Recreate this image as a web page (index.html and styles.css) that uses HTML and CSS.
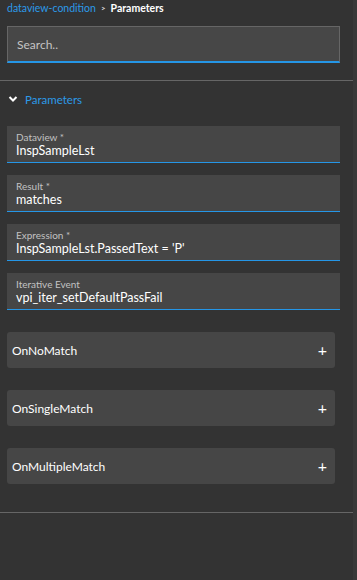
FILE: index.html
```html
<!DOCTYPE html>
<html lang="en">
<head>
  <meta charset="UTF-8">
  <meta name="viewport" content="width=device-width, initial-scale=1.0">
  <title>Parameters</title>
  <link rel="stylesheet" href="styles.css">
</head>
<body>
<div class="panel">
  <div class="crumbs">
    <a class="crumb-link">dataview-condition</a>
    <span class="crumb-sep">&gt;</span>
    <span class="crumb-current">Parameters</span>
  </div>

  <div class="search">
    <input type="text" placeholder="Search..">
  </div>

  <div class="section">
    <div class="section-head">
      <svg class="chevron" width="10" height="8" viewBox="0 0 10 8">
        <path d="M1.5 2 L5 5.5 L8.5 2" fill="none" stroke="#ffffff" stroke-width="2"/>
      </svg>
      <span>Parameters</span>
    </div>

    <div class="fields">
      <div class="field">
        <label>Dataview *</label>
        <div class="value">InspSampleLst</div>
      </div>
      <div class="field">
        <label>Result *</label>
        <div class="value">matches</div>
      </div>
      <div class="field">
        <label>Expression *</label>
        <div class="value">InspSampleLst.PassedText = 'P'</div>
      </div>
      <div class="field">
        <label>Iterative Event</label>
        <div class="value">vpi_iter_setDefaultPassFail</div>
      </div>
    </div>

    <div class="groups">
      <div class="group">
        <span>OnNoMatch</span>
        <span class="plus">+</span>
      </div>
      <div class="group">
        <span>OnSingleMatch</span>
        <span class="plus">+</span>
      </div>
      <div class="group">
        <span>OnMultipleMatch</span>
        <span class="plus">+</span>
      </div>
    </div>
  </div>
</div>
</body>
</html>
```

FILE: styles.css
```css
html, body {
  margin: 0;
  padding: 0;
  height: 100%;
}
body {
  background-color: #393939;
  font-family: Lato, "Open Sans", sans-serif;
  color: #ffffff;
}
.panel {
  width: 353px;
  min-height: 100%;
  background-color: #333333;
}
.crumbs {
  display: flex;
  align-items: center;
  gap: 5px;
  padding: 0 0 0 7px;
  height: 15px;
  font-size: 10.5px;
}
.crumb-link {
  color: #2c9ae8;
}
.crumb-sep {
  color: #dddddd;
  font-size: 8px;
  font-weight: bold;
}
.crumb-current {
  font-weight: bold;
}
.search {
  padding: 11px 0 0 7px;
}
.search input {
  display: block;
  width: 333px;
  height: 37px;
  box-sizing: border-box;
  padding: 0 9px;
  background-color: #474747;
  border: 1px solid #666666;
  border-bottom: 2px solid #2596e6;
  color: #ffffff;
  font-family: inherit;
  font-size: 12px;
  outline: none;
}
.search input::placeholder {
  color: #c4c4c4;
}
.section {
  margin-top: 17px;
  border-top: 1px solid #666666;
  border-bottom: 1px solid #666666;
  padding-bottom: 28px;
}
.section-head {
  display: flex;
  align-items: center;
  gap: 7px;
  height: 36px;
  padding: 0 0 0 8px;
  color: #2c9ae8;
  font-size: 11.5px;
}
.chevron {
  display: block;
}
.fields {
  display: flex;
  flex-direction: column;
  gap: 12px;
  padding: 9px 0 0 7px;
}
.field {
  width: 333px;
  height: 37px;
  box-sizing: border-box;
  padding: 5px 9px 0;
  background-color: #464646;
  border-bottom: 1px solid #2596e6;
}
.field label {
  display: block;
  font-size: 10px;
  line-height: 12px;
  color: #c2c2c2;
}
.value {
  font-size: 12.5px;
  line-height: 16px;
}
.groups {
  display: flex;
  flex-direction: column;
  gap: 22px;
  padding: 22px 0 0 7px;
}
.group {
  display: flex;
  align-items: center;
  justify-content: space-between;
  width: 328px;
  height: 36px;
  box-sizing: border-box;
  padding: 0 8px 0 5px;
  background-color: #464646;
  border-radius: 3px;
  font-size: 12px;
}
.plus {
  font-size: 16px;
  line-height: 1;
}
```
